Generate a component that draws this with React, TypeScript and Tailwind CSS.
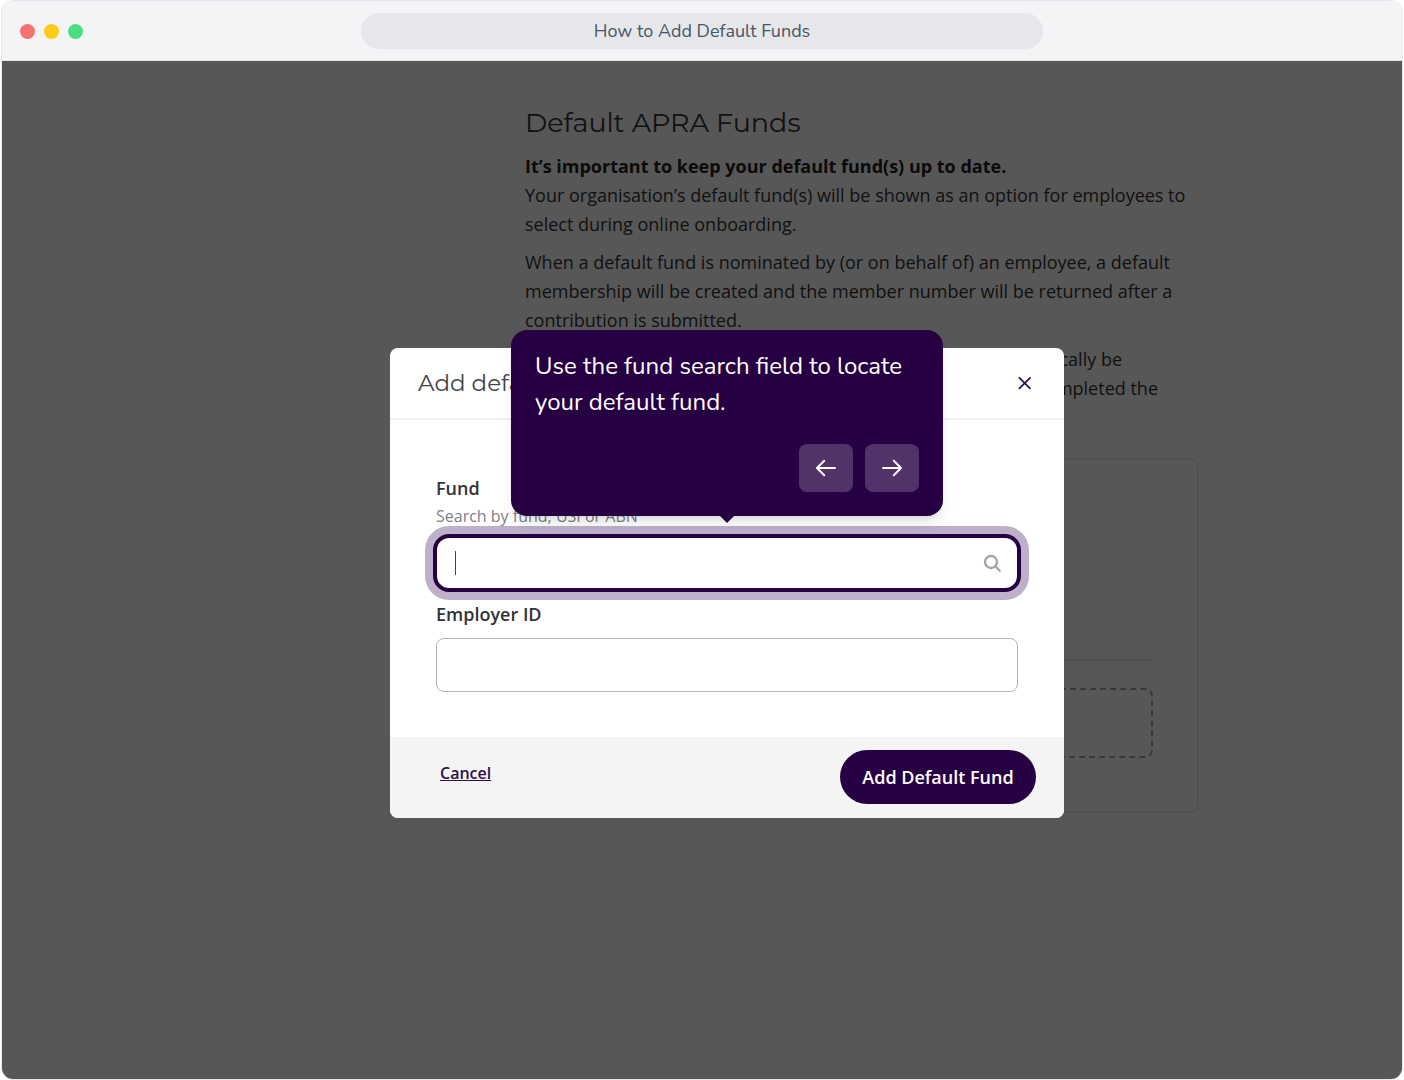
import { useId } from "react";

const dots = ["bg-[#f87171]", "bg-[#facc15]", "bg-[#4ade80]"];

function ArrowIcon({ d }: { d: string }) {
  return (
    <svg
      width="24"
      height="24"
      viewBox="0 0 24 24"
      fill="none"
      stroke="currentColor"
      strokeWidth="2"
      strokeLinecap="round"
      strokeLinejoin="round"
    >
      <path d={d} />
    </svg>
  );
}

function TitleBar() {
  return (
    <header className="grid grid-cols-[1fr_2fr_1fr] items-center border-b border-gray-200 bg-gray-100 px-[18px] pt-3 pb-[11px]">
      <div className="flex gap-[9px]">
        {dots.map((color) => (
          <span key={color} className={`size-[15px] rounded-full ${color}`} />
        ))}
      </div>
      <div className="h-9 rounded-full bg-gray-200 text-center font-['Nunito','Lato',sans-serif] text-lg leading-9 text-gray-600">
        How to Add Default Funds
      </div>
    </header>
  );
}

function DefaultFundsPage() {
  return (
    <div className="pt-[43px] pb-10 pl-[320px] text-[#333]">
      <div className="mx-auto max-w-[674px] text-lg leading-[29px]">
        <h1 className="mb-[10px] font-['Montserrat','Lato',sans-serif] text-[27px] leading-[38px] text-[#333]">
          Default APRA Funds
        </h1>
        <p className="mb-[9px]">
          <strong className="block font-bold text-[#222]">
            It’s important to keep your default fund(s) up to date.
          </strong>
          Your organisation’s default fund(s) will be shown as an option for employees to select during
          online onboarding.
        </p>
        <p className="mb-[10px]">
          When a default fund is nominated by (or on behalf of) an employee, a default membership will be
          created and the member number will be returned after a contribution is submitted.
        </p>
        <p className="mb-[55px] text-right">
          <span className="block pr-[77px]">automatically be</span>
          <span className="block pr-[41px]">completed the</span>
        </p>
        <div className="rounded-lg border-2 border-[#ececec] px-11 pt-[199px] pb-[53px]">
          <hr className="mb-[27px] border-t-2 border-[#e8e8e8]" />
          <div className="h-[70px] rounded-lg border-2 border-dashed border-[#a4a4ac]" />
        </div>
      </div>
    </div>
  );
}

function StepTooltip() {
  return (
    <div
      role="tooltip"
      className="absolute bottom-full left-1/2 z-10 mb-[22px] w-[432px] -translate-x-1/2 rounded-2xl bg-[#270044] px-6 pt-[18px] pb-6 shadow-lg"
    >
      <p className="font-['Nunito','Lato',sans-serif] text-2xl leading-9 text-white">
        Use the fund search field to locate your default fund.
      </p>
      <div className="mt-6 flex justify-end gap-3">
        <button
          type="button"
          aria-label="Previous step"
          className="flex h-12 w-[54px] items-center justify-center rounded-lg bg-white/20 text-white"
        >
          <ArrowIcon d="M10.2 4.8 3 12l7.2 7.2M3 12h18" />
        </button>
        <button
          type="button"
          aria-label="Next step"
          className="flex h-12 w-[54px] items-center justify-center rounded-lg bg-white/20 text-white"
        >
          <ArrowIcon d="M13.8 4.8 21 12l-7.2 7.2M21 12H3" />
        </button>
      </div>
      <svg
        className="absolute top-full left-1/2 -translate-x-1/2"
        width="14"
        height="7"
        viewBox="0 0 14 7"
        fill="#270044"
      >
        <path d="M0 0h14L7 7z" />
      </svg>
    </div>
  );
}

function AddFundDialog() {
  const fundId = useId();
  const employerId = useId();

  return (
    <div
      role="dialog"
      aria-label="Add default fund"
      className="w-full max-w-[674px] self-start rounded-lg bg-white text-[#333]"
    >
      <div className="flex h-[72px] items-center justify-between border-b-2 border-[#f0f0f0] pr-8 pl-7">
        <h2 className="font-['Montserrat','Lato',sans-serif] text-[23px] text-[#444]">Add default fund</h2>
        <button type="button" aria-label="Close" className="text-[#2e0f4e]">
          <svg width="14" height="14" viewBox="0 0 14 14" fill="none" stroke="currentColor" strokeWidth="1.8">
            <path d="M1.4 1.8 12 12.4M12 1.8 1.4 12.4" strokeLinecap="round" />
          </svg>
        </button>
      </div>

      <form className="px-[46px] pt-[54px] pb-[45px]">
        <label htmlFor={fundId} className="block text-lg leading-7 font-semibold">
          Fund
        </label>
        <p className="mt-0.5 mb-1.5 text-base leading-6 text-[#7c7f86]">Search by fund, USI or ABN</p>
        <div className="relative -mx-[3px] flex h-[58px] items-center rounded-2xl border-4 border-[#270044] bg-white pr-4 pl-[18px] ring-8 ring-[#bdb0c8]">
          <span className="h-6 w-px bg-[#444]" />
          <input id={fundId} type="text" className="h-full min-w-0 flex-1 outline-none" />
          <svg
            width="18"
            height="18"
            viewBox="0 0 18 18"
            fill="none"
            stroke="#9fa4ae"
            strokeWidth="2.3"
            strokeLinecap="round"
          >
            <circle cx="8" cy="8" r="6" />
            <path d="m12.4 12.4 4.3 4.3" />
          </svg>
          <StepTooltip />
        </div>

        <label htmlFor={employerId} className="mt-2 block text-lg leading-7 font-semibold">
          Employer ID
        </label>
        <input
          id={employerId}
          type="text"
          className="mt-[10px] block h-[54px] w-full rounded-lg border border-[#b0b2ba] px-4 outline-none"
        />
      </form>

      <div className="flex items-start justify-between rounded-b-lg bg-[#f4f4f4] pt-[13px] pr-7 pb-[14px] pl-[50px]">
        <a href="#" className="text-base leading-[46px] font-semibold text-[#2e0f4e] underline">
          Cancel
        </a>
        <button
          type="button"
          className="h-[54px] w-[196px] rounded-full bg-[#270044] text-lg font-semibold text-white"
        >
          Add Default Fund
        </button>
      </div>
    </div>
  );
}

export default function App() {
  return (
    <div className="min-h-screen bg-white px-px font-['Open_Sans',sans-serif]">
      <div className="flex min-h-screen flex-col overflow-hidden rounded-xl border border-gray-200">
        <TitleBar />
        <main className="relative flex-1">
          <DefaultFundsPage />
          <div className="absolute inset-0 flex justify-center bg-black/66 pt-[287px] pl-[50px]">
            <AddFundDialog />
          </div>
        </main>
      </div>
    </div>
  );
}
